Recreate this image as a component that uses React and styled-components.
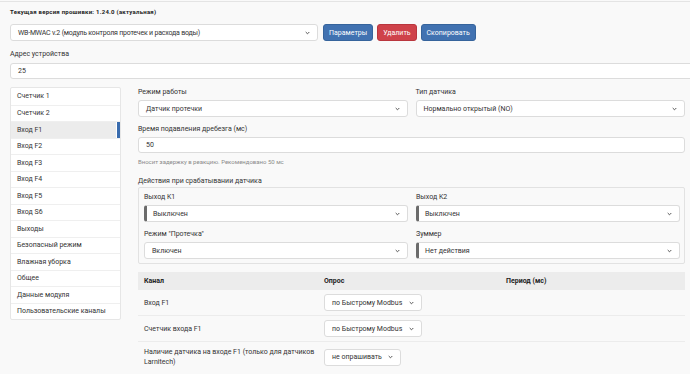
import React from "react";
import styled, { createGlobalStyle, css } from "styled-components";

const GlobalStyle = createGlobalStyle`
  html, body {
    margin: 0;
    padding: 0;
    background: #f9f9f9;
    font-family: Roboto, "Liberation Sans", Arial, sans-serif;
    font-size: 7px;
    color: #333;
    overflow: hidden;
  }
  * { box-sizing: border-box; }
`;

const Page = styled.div`
  margin-top: 1px;
  border-top: 1px solid #e4e4e4;
  padding-left: 10px;
  width: 700px;
`;

const Firmware = styled.div`
  font-weight: 700;
  font-size: 6px;
  letter-spacing: 0.25px;
  line-height: 10px;
  padding-top: 5px;
  color: #222;
`;

const DeviceRow = styled.div`
  display: flex;
  align-items: center;
  gap: 4px;
  margin-top: 7px;
`;

const Chevron = () => (
  <svg width="5" height="4" viewBox="0 0 5 4">
    <polyline points="0.7,1 2.5,2.8 4.3,1" fill="none" stroke="#555" strokeWidth="1" />
  </svg>
);

const SelectBox = styled.div`
  display: flex;
  align-items: center;
  justify-content: space-between;
  gap: 6px;
  flex-shrink: 0;
  height: 17px;
  width: ${p => (p.$w ? `${p.$w}px` : "100%")};
  background: #fff;
  border: 1px solid #dcdcdc;
  border-radius: 3px;
  padding: 0 7px;
  letter-spacing: ${p => p.$ls || 0}px;
  color: #333;
  white-space: nowrap;
  ${p => p.$mark && css`
    border-left: 3px solid #6b6b6b;
    padding-left: 6px;
  `}
`;

const Select = ({ children, ...rest }) => (
  <SelectBox {...rest}>
    <span>{children}</span>
    <Chevron />
  </SelectBox>
);

const Button = styled.button`
  height: 17px;
  padding: 0 5px;
  border: 1px solid ${p => (p.$danger ? "#b9363e" : "#36649c")};
  border-radius: 3px;
  background: ${p => (p.$danger ? "#cf424a" : "#4172b1")};
  color: #fff;
  font-family: inherit;
  font-size: 7px;
  margin-left: ${p => (p.$first ? "1px" : "0")};
`;

const Label = styled.div`
  line-height: 10px;
  color: #333;
  margin: ${p => p.$m || "0"};
`;

const TextInput = styled.div`
  height: 16px;
  background: #fff;
  border: 1px solid #dcdcdc;
  border-radius: 3px;
  display: flex;
  align-items: center;
  padding-left: 7px;
`;

const Main = styled.div`
  display: grid;
  grid-template-columns: 111px 1fr;
  gap: 17px;
  margin-top: 8px;
  margin-right: 15px;
  align-items: start;
`;

const Nav = styled.div`
  background: #fff;
  border: 1px solid #e6e6e6;
  border-radius: 2px;
`;

const NavItem = styled.div`
  height: 16.5px;
  display: flex;
  align-items: center;
  padding-left: 6px;
  border-top: ${p => (p.$first ? "none" : "1px solid #efefef")};
  color: #333;
  ${p => p.$active && css`
    background: #ececec;
    box-shadow: inset -3px 0 0 #3a6cae, inset -4px 0 0 #fff;
  `}
`;

const Content = styled.div`
  display: flex;
  flex-direction: column;
`;

const TwoCols = styled.div`
  display: grid;
  grid-template-columns: 1fr 1fr;
  column-gap: 8px;
`;

const Field = styled.div`
  display: flex;
  flex-direction: column;
  gap: 3px;
`;

const Help = styled.div`
  color: #8a8a8a;
  font-size: 6px;
  line-height: 10px;
  margin-top: 4px;
`;

const Fieldset = styled.div`
  border: 1px solid #e2e2e2;
  border-radius: 2px;
  padding: 4px 4px 4px 5px;
  margin-top: 1px;
  display: grid;
  grid-template-columns: 1fr 1fr;
  column-gap: 8px;
  row-gap: 7px;
`;

const Table = styled.div`
  margin-top: 8px;
  display: grid;
  grid-template-columns: 180px 182px 1fr;
`;

const HeadCell = styled.div`
  background: #ececec;
  height: 18px;
  display: flex;
  align-items: center;
  padding-left: 6px;
  font-weight: 700;
  color: #222;
`;

const Cell = styled.div`
  min-height: ${p => (p.$last ? 30 : 25)}px;
  display: flex;
  align-items: center;
  padding: 4px 2px 4px 6px;
  line-height: 10px;
  border-bottom: ${p => (p.$last ? "none" : "1px solid #ececec")};
`;

const navItems = [
  "Счетчик 1",
  "Счетчик 2",
  "Вход F1",
  "Вход F2",
  "Вход F3",
  "Вход F4",
  "Вход F5",
  "Вход S6",
  "Выходы",
  "Безопасный режим",
  "Влажная уборка",
  "Общее",
  "Данные модуля",
  "Пользовательские каналы",
];

const rows = [
  { name: "Вход F1", poll: "по Быстрому Modbus", w: 98 },
  { name: "Счетчик входа F1", poll: "по Быстрому Modbus", w: 98 },
  {
    name: "Наличие датчика на входе F1 (только для датчиков Larnitech)",
    poll: "не опрашивать",
    w: 77,
  },
];

export default function App() {
  return (
    <>
      <GlobalStyle />
      <Page>
        <Firmware>Текущая версия прошивки: 1.24.0 (актуальная)</Firmware>
        <DeviceRow>
          <Select $w={308} $ls={-0.2}>
            WB-MWAC v.2 (модуль контроля протечек и расхода воды)
          </Select>
          <Button $first>Параметры</Button>
          <Button $danger>Удалить</Button>
          <Button>Скопировать</Button>
        </DeviceRow>
        <Label $m="8px 0 4px">Адрес устройства</Label>
        <TextInput>25</TextInput>

        <Main>
          <Nav>
            {navItems.map((item, i) => (
              <NavItem key={item} $first={i === 0} $active={item === "Вход F1"}>
                {item}
              </NavItem>
            ))}
          </Nav>

          <Content>
            <TwoCols>
              <Field>
                <Label>Режим работы</Label>
                <Select>Датчик протечки</Select>
              </Field>
              <Field>
                <Label>Тип датчика</Label>
                <Select>Нормально открытый (NO)</Select>
              </Field>
            </TwoCols>

            <Label $m="7px 0 3px">Время подавления дребезга (мс)</Label>
            <TextInput>50</TextInput>
            <Help>Вносит задержку в реакцию. Рекомендовано 50 мс</Help>

            <Label $m="9px 0 0">Действия при срабатывании датчика</Label>
            <Fieldset>
              <Field>
                <Label>Выход K1</Label>
                <Select $mark>Выключен</Select>
              </Field>
              <Field>
                <Label>Выход K2</Label>
                <Select $mark>Выключен</Select>
              </Field>
              <Field>
                <Label>Режим "Протечка"</Label>
                <Select>Включен</Select>
              </Field>
              <Field>
                <Label>Зуммер</Label>
                <Select $mark>Нет действия</Select>
              </Field>
            </Fieldset>

            <Table>
              <HeadCell>Канал</HeadCell>
              <HeadCell>Опрос</HeadCell>
              <HeadCell>Период (мс)</HeadCell>
              {rows.map((r, i) => {
                const last = i === rows.length - 1;
                return (
                  <React.Fragment key={r.name}>
                    <Cell $last={last}>{r.name}</Cell>
                    <Cell $last={last}>
                      <Select $w={r.w}>{r.poll}</Select>
                    </Cell>
                    <Cell $last={last} />
                  </React.Fragment>
                );
              })}
            </Table>
          </Content>
        </Main>
      </Page>
    </>
  );
}
